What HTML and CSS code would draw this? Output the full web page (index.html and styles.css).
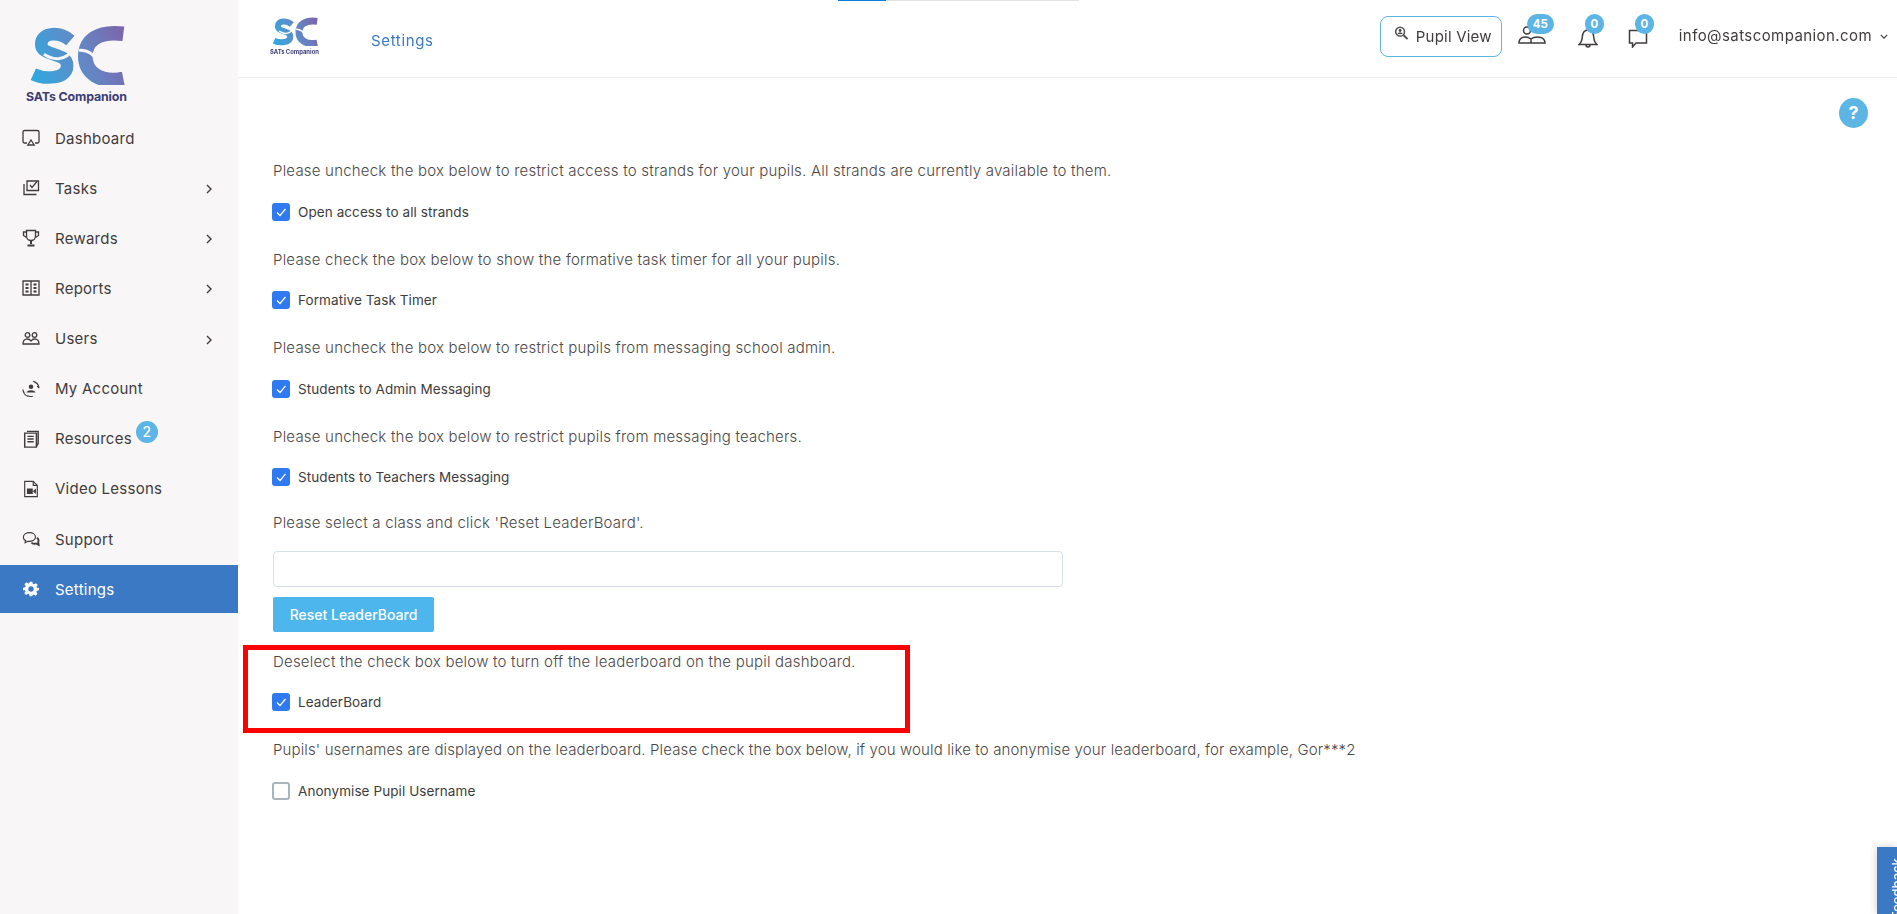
FILE: index.html
```html
<!DOCTYPE html>
<html lang="en">
<head>
<meta charset="utf-8">
<title>Settings</title>
<link rel="stylesheet" href="styles.css">
</head>
<body>
<svg class="defs" width="0" height="0" aria-hidden="true">
  <defs>
    <linearGradient id="scg" gradientUnits="userSpaceOnUse" x1="60" y1="190" x2="340" y2="90">
      <stop offset="0" stop-color="#2fa9e0"/>
      <stop offset=".5" stop-color="#5f8cc8"/>
      <stop offset="1" stop-color="#7a68ae"/>
    </linearGradient>
    <symbol id="sc-mark" viewBox="55 42 290 180">
      <path d="M180 88C150 62 92 60 92 100C92 137 172 122 170 165C170 207 100 205 68 190" fill="none" stroke="url(#scg)" stroke-width="38"/>
      <path d="M340 68C262 58 225 90 225 136C225 186 270 218 340 204" fill="none" stroke="url(#scg)" stroke-width="44"/>
      <path d="M340 92V182C300 190 262 175 262 136C262 105 300 88 340 92Z" fill="currentColor"/>
      <path d="M100 130C130 150 165 150 192 112M205 118C232 116 250 128 268 160" fill="none" stroke="currentColor" stroke-width="9"/>
    </symbol>
  </defs>
</svg>
<div class="progress"><span class="progress-fill"></span></div>
<aside class="sidebar">
  <div class="side-logo">
    <svg class="side-mark"><use href="#sc-mark"/></svg>
    <span class="side-brand">SATs Companion</span>
  </div>
  <nav class="nav">
    <a class="nav-item"><svg class="nav-icon" viewBox="0 0 18 18"><path d="M5 14H2.500A1.500 1.500 0 0 1 1 12.500V3A1.500 1.500 0 0 1 2.500 1.500h13A1.500 1.500 0 0 1 17 3v9.500a1.500 1.500 0 0 1-1.500 1.500H13"/><path d="M9 11l3.200 5H5.800z"/></svg><span>Dashboard</span></a>
    <a class="nav-item"><svg class="nav-icon" viewBox="0 0 18 18"><path d="M5 2h11.500v9.500H5z"/><path d="M8 6l2 2.500 5-6"/><path d="M2 5v10.500h12.500"/></svg><span>Tasks</span><svg class="chev" viewBox="0 0 6 10"><path d="M1 1l4 4-4 4"/></svg></a>
    <a class="nav-item"><svg class="nav-icon" viewBox="0 0 18 18"><path d="M4.500 1.500h9V7a4.500 4.500 0 0 1-9 0z"/><path d="M4.500 3H1.500v3.500l3 2M13.500 3h3v3.500l-3 2"/><path d="M9 11.500V15M5.500 16.500h7" stroke-width="2"/></svg><span>Rewards</span><svg class="chev" viewBox="0 0 6 10"><path d="M1 1l4 4-4 4"/></svg></a>
    <a class="nav-item"><svg class="nav-icon" viewBox="0 0 18 18"><path d="M1 2h16v14H1zM9 2v14"/><path d="M3.500 5.500h3M11.500 5.500h3M3.500 9h3M11.500 9h3M3.500 12.500h3M11.500 12.500h3" stroke-width="1.800"/></svg><span>Reports</span><svg class="chev" viewBox="0 0 6 10"><path d="M1 1l4 4-4 4"/></svg></a>
    <a class="nav-item"><svg class="nav-icon" viewBox="0 0 18 18"><circle cx="5.500" cy="5" r="2.300"/><circle cx="12.500" cy="5" r="2.300"/><path d="M1 14c0-6 6-6 8-3 2-3 8-3 8 3z"/></svg><span>Users</span><svg class="chev" viewBox="0 0 6 10"><path d="M1 1l4 4-4 4"/></svg></a>
    <a class="nav-item"><svg class="nav-icon" viewBox="0 0 20 20"><circle class="solid" cx="10" cy="7.500" r="2.500"/><path class="solid" d="M5 14c1-3.500 9-3.500 10 0z"/><path d="M1 10.500C1.500 14.500 3 17 6.500 18M1 11.500l1.500 3M19 9C18.500 5 16 2.500 12.500 1.500M19 9l-2-2.500M6 17.500c2 1 4 1 6 .5"/></svg><span>My Account</span></a>
    <a class="nav-item"><svg class="nav-icon" viewBox="0 0 18 20"><path d="M4.500 1.500h12.500V15l-2 3.500M2 3.500h13V19H2z" stroke-width="1.600"/><path d="M5 7h7M5 10h7M5 13h7" stroke-width="1.500"/></svg><span>Resources</span><span class="res-badge">2</span></a>
    <a class="nav-item"><svg class="nav-icon" viewBox="0 0 18 20"><path d="M2 1.500h9.500L16 6v12.500H2z"/><path d="M11.500 1.500V6H16"/><path class="solid" d="M4.500 9.500h6.500v6H4.500zM11.500 12l3-2.500v6l-3-2.500z"/></svg><span>Video Lessons</span></a>
    <a class="nav-item"><svg class="nav-icon" viewBox="0 0 20 18"><path d="M8.500 2C4.500 2 1.500 4 1.500 7c0 1.800 1 3 2.500 3.800L3.500 13l3-1.500c4.500.5 8.500-1.300 8.500-4.500 0-3-3-5-6.500-5z"/><path d="M16.500 7.500c1.500 1 2.500 2.500 1.500 4.500l.5 3.500-3-1.500c-2 .5-4 0-5-1" stroke-width="2"/></svg><span>Support</span></a>
    <a class="nav-item active"><svg class="nav-icon gear" viewBox="0 0 24 24"><path d="M10 1h4l.7 3.200 1.800.8L19.300 3.200l2.800 2.800-1.800 2.800.8 1.800L24 10v4l-3.200.7-.8 1.800 1.800 2.800-2.800 2.800-2.800-1.800-1.800.8L14 23h-4l-.7-3.100-1.800-.8-2.800 1.800L1.900 18.300l1.800-2.800-.8-1.800L0 14v-4l3.200-.7.800-1.800L2.200 4.800 5 2l2.800 1.800 1.800-.8zM12 8a4 4 0 1 0 0 8 4 4 0 0 0 0-8z" fill-rule="evenodd"/></svg><span>Settings</span></a>
  </nav>
</aside>
<div class="page">
  <header class="topbar">
    <div class="top-logo">
      <svg class="top-mark"><use href="#sc-mark"/></svg>
      <span class="top-brand">SATs Companion</span>
    </div>
    <a class="crumb">Settings</a>
    <div class="top-actions">
      <button class="pupil-btn"><svg class="pupil-icon" viewBox="0 0 16 16"><circle cx="6.500" cy="6" r="4.700"/><circle class="solid" cx="6.500" cy="4.800" r="1.500"/><path class="solid" d="M3.800 8.500c.8-2 4.600-2 5.400 0z"/><path d="M10 9.500l4.500 4.500" stroke-width="2.200"/></svg>Pupil View</button>
      <div class="bell-wrap users"><svg class="top-icon wide" viewBox="0 0 28 18"><circle cx="9" cy="4.500" r="3.500"/><path d="M1 17c0-7 8-7 12-4 4-3 14-3 14 4zM13 13v4"/></svg><span class="count count-wide">45</span></div>
      <div class="bell-wrap"><svg class="top-icon" viewBox="0 0 20 20"><path d="M1 16.500c2.500-2 3-4 3.300-7.500C4.600 5 6.500 2 10 2s5.400 3 5.700 7c.3 3.500.8 5.500 3.300 7.500z"/><path d="M8 17c0 2.500 4 2.500 4 0"/></svg><span class="count">0</span></div>
      <div class="bell-wrap"><svg class="top-icon" viewBox="0 0 20 20"><path d="M1.500 2.500h17v12.500H8l-3.500 4v-4h-3z"/></svg><span class="count">0</span></div>
      <a class="account">info@satscompanion.com<svg class="caret" viewBox="0 0 10 6"><path d="M1 1l4 4 4-4"/></svg></a>
    </div>
  </header>
  <main class="content">
    <div class="help-row"><span class="help">?</span></div>
    <section class="setting">
      <p class="desc">Please uncheck the box below to restrict access to strands for your pupils. All strands are currently available to them.</p>
      <label class="check-row"><span class="box on"><svg viewBox="0 0 18 18"><path d="M5 9.500l3 3 5.500-6.500"/></svg></span>Open access to all strands</label>
    </section>
    <section class="setting">
      <p class="desc">Please check the box below to show the formative task timer for all your pupils.</p>
      <label class="check-row"><span class="box on"><svg viewBox="0 0 18 18"><path d="M5 9.500l3 3 5.500-6.500"/></svg></span>Formative Task Timer</label>
    </section>
    <section class="setting">
      <p class="desc">Please uncheck the box below to restrict pupils from messaging school admin.</p>
      <label class="check-row"><span class="box on"><svg viewBox="0 0 18 18"><path d="M5 9.500l3 3 5.500-6.500"/></svg></span>Students to Admin Messaging</label>
    </section>
    <section class="setting tight">
      <p class="desc">Please uncheck the box below to restrict pupils from messaging teachers.</p>
      <label class="check-row"><span class="box on"><svg viewBox="0 0 18 18"><path d="M5 9.500l3 3 5.500-6.500"/></svg></span>Students to Teachers Messaging</label>
    </section>
    <section class="reset">
      <p class="desc">Please select a class and click 'Reset LeaderBoard'.</p>
      <div class="select-box"></div>
      <button class="reset-btn">Reset LeaderBoard</button>
    </section>
    <section class="setting highlighted">
      <span class="red-box"></span>
      <p class="desc">Deselect the check box below to turn off the leaderboard on the pupil dashboard.</p>
      <label class="check-row"><span class="box on"><svg viewBox="0 0 18 18"><path d="M5 9.500l3 3 5.500-6.500"/></svg></span>LeaderBoard</label>
    </section>
    <section class="setting">
      <p class="desc long">Pupils' usernames are displayed on the leaderboard. Please check the box below, if you would like to anonymise your leaderboard, for example, Gor***2</p>
      <label class="check-row"><span class="box"></span>Anonymise Pupil Username</label>
    </section>
  </main>
</div>
<div class="feedback"><span>Feedback</span></div>
</body>
</html>
```
FILE: styles.css
```css
* { box-sizing: border-box; }
html, body { height: 100%; }
body {
  margin: 0;
  height: 914px;
  overflow: hidden;
  display: flex;
  background: #fff;
  font-family: Inter, "Open Sans", sans-serif;
  color: #3f3b3b;
}
a { color: inherit; text-decoration: none; }
.defs { position: absolute; }

.progress {
  position: fixed;
  top: 0;
  left: 838px;
  width: 241px;
  height: 1px;
  background: #e3e3e3;
}
.progress-fill { display: block; width: 48px; height: 100%; background: #0a7fe0; }

.sidebar {
  flex: 0 0 238px;
  background: #f9f6f8;
  color: #f9f6f8;
}
.side-logo {
  height: 114px;
  padding: 25px 0 0 26px;
  display: flex;
  flex-direction: column;
}
.side-mark { width: 96px; height: 60px; margin-left: 3px; }
.side-brand {
  font-size: 12.400px;
  font-weight: 700;
  line-height: 14px;
  letter-spacing: -.15px;
  white-space: nowrap;
  color: #3d3c74;
  margin-top: 5px;
}
.nav { display: flex; flex-direction: column; gap: 2.150px; color: #403c3c; }
.nav-item {
  position: relative;
  height: 48px;
  padding-left: 22px;
  display: flex;
  align-items: center;
  font-size: 15px;
  letter-spacing: .25px;
}
.nav-item > span:first-of-type { margin-left: 15px; }
.nav-icon {
  flex: none;
  width: 18px;
  height: 18px;
  fill: none;
  stroke: #403c3c;
  stroke-width: 1.300;
}
.solid { fill: #403c3c; stroke: none; }
.chev {
  position: absolute;
  left: 206px;
  top: 20px;
  width: 6px;
  height: 10px;
  fill: none;
  stroke: #403c3c;
  stroke-width: 1.400;
}
.res-badge {
  position: absolute;
  left: 136px;
  top: 6px;
  width: 22px;
  height: 22px;
  border-radius: 50%;
  background: #5db5e6;
  color: #fff;
  font-size: 14px;
  font-weight: 500;
  line-height: 22px;
  text-align: center;
}
.nav-item.active { background: #3b79c4; color: #fff; }
.gear { fill: #fff; stroke: none; width: 16px; height: 16px; margin: 0 1px; }

.page { flex: 1; min-width: 0; display: flex; flex-direction: column; }
.topbar {
  height: 78px;
  flex: none;
  border-bottom: 1px solid #eeeeee;
  display: flex;
  align-items: flex-start;
  color: #fff;
  position: relative;
}
.top-logo {
  width: 50px;
  margin: 17px 0 0 32px;
  display: flex;
  flex-direction: column;
}
.top-mark { width: 46px; height: 29px; margin-left: 2px; }
.top-brand {
  font-size: 5.900px;
  font-weight: 700;
  line-height: 7px;
  white-space: nowrap;
  color: #3d3c74;
  margin-top: 2px;
}
.crumb {
  margin: 31px 0 0 51px;
  font-size: 15px;
  line-height: 20px;
  letter-spacing: .65px;
  color: #3b79c4;
}
.top-actions { margin-left: auto; position: relative; display: flex; align-items: flex-start; color: #403c3c; }
.pupil-btn {
  width: 122px;
  height: 41px;
  margin-top: 16px;
  padding: 0 0 0 13px;
  display: flex;
  align-items: center;
  gap: 7px;
  background: #fff;
  border: 1px solid #5db5e6;
  border-radius: 8px;
  font: inherit;
  font-size: 15px;
  letter-spacing: .2px;
  color: #403c3c;
}
.pupil-icon { width: 15px; height: 15px; fill: none; stroke: #555; stroke-width: 1.700; margin-top: -6px; }
.bell-wrap { position: relative; width: 50px; height: 60px; margin-left: 0; }
.users { width: 60px; margin-left: 16px; }
.top-icon {
  position: absolute;
  left: 0;
  top: 28px;
  width: 20px;
  height: 20px;
  fill: none;
  stroke: #403c3c;
  stroke-width: 1.500;
}
.top-icon.wide { width: 28px; height: 18px; top: 26px; }
.count {
  position: absolute;
  left: 7px;
  top: 14px;
  width: 19px;
  height: 20px;
  border-radius: 10px;
  background: #5db5e6;
  color: #fff;
  font-size: 11.500px;
  font-weight: 700;
  line-height: 20px;
  text-align: center;
}
.count-wide { left: 9px; width: 27px; }
.account {
  margin: 26px 9px 0 1px;
  display: flex;
  align-items: center;
  font-size: 15px;
  line-height: 20px;
  letter-spacing: .42px;
}
.caret { width: 8px; height: 5px; margin-left: 8px; fill: none; stroke: #403c3c; stroke-width: 1.400; }

.content { flex: 1; padding: 20px 29px 0 35px; }
.help-row { display: flex; justify-content: flex-end; height: 30px; margin-bottom: 32px; }
.help {
  width: 29px;
  height: 30px;
  border-radius: 50%;
  background: #5db5e6;
  color: #fff;
  font-size: 18px;
  font-weight: 700;
  line-height: 30px;
  text-align: center;
}
.desc {
  margin: 0 0 20px;
  font-size: 15px;
  font-weight: 300;
  line-height: 22.500px;
  letter-spacing: .21px;
  color: #4b4747;
}
.desc.long { letter-spacing: .13px; }
.setting { position: relative; height: 88.500px; }
.setting.tight { height: 86px; }
.check-row {
  display: flex;
  align-items: center;
  height: 18px;
  font-size: 13.500px;
  letter-spacing: .08px;
  color: #403c3c;
}
.box {
  flex: none;
  width: 18px;
  height: 18px;
  margin: 0 8px 0 -1px;
  border: 2px solid #a9b4bc;
  border-radius: 3px;
  background: #fff;
}
.box.on { background: #2f7af0; border: 0; }
.box svg { display: block; width: 18px; height: 18px; fill: none; stroke: #fff; stroke-width: 1.200; }
.reset { height: 139px; }
.reset .desc { margin-bottom: 17px; }
.select-box {
  width: 790px;
  height: 36px;
  border: 1px solid #d6e0e8;
  border-radius: 4px;
  background: #fff;
}
.reset-btn {
  display: block;
  width: 161px;
  height: 35px;
  margin-top: 10px;
  background: #4db6ec;
  border: 0;
  border-radius: 2px;
  color: #fff;
  font: inherit;
  font-size: 14px;
  font-weight: 500;
}
.red-box {
  position: absolute;
  left: -30px;
  top: -6px;
  width: 667px;
  height: 88px;
  border: 5px solid #f00;
  pointer-events: none;
}
.feedback {
  position: fixed;
  right: 0;
  bottom: 0;
  width: 20px;
  height: 67px;
  background: #3b79c4;
  box-shadow: 0 0 8px rgba(0, 0, 0, .2);
  overflow: hidden;
}
.feedback span {
  display: block;
  writing-mode: vertical-rl;
  transform: rotate(180deg);
  position: absolute;
  left: 10px;
  top: -18px;
  width: 20px;
  height: 90px;
  text-align: left;
  color: #fff;
  font-size: 13px;
  font-weight: 500;
  line-height: 20px;
}
```
